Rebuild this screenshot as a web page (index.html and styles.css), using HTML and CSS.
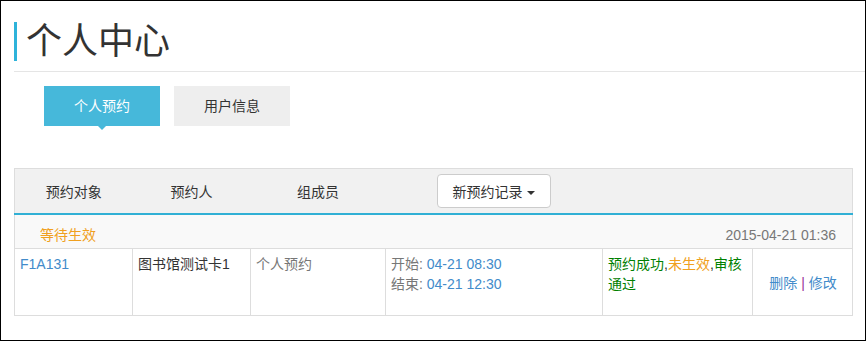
FILE: index.html
```html
<!DOCTYPE html>
<html lang="zh-CN">
<head>
    <meta charset="UTF-8">
    <title>个人中心</title>
    <link rel="stylesheet" href="styles.css">
</head>
<body>
    <div class="page">
        <div class="page-header">
            <h1>个人中心</h1>
        </div>

        <div class="tabs">
            <a class="tab active" href="#">个人预约</a>
            <a class="tab" href="#">用户信息</a>
        </div>

        <table class="records">
            <colgroup>
                <col style="width: 118px">
                <col style="width: 118px">
                <col style="width: 135px">
                <col style="width: 217px">
                <col style="width: 150px">
                <col style="width: 100px">
            </colgroup>
            <thead>
                <tr>
                    <th>预约对象</th>
                    <th>预约人</th>
                    <th>组成员</th>
                    <th><button class="dropdown-btn">新预约记录 <span class="caret"></span></button></th>
                    <th></th>
                    <th></th>
                </tr>
            </thead>
            <tbody>
                <tr class="group-row">
                    <td colspan="6">
                        <span class="status-wait">等待生效</span>
                        <span class="group-time">2015-04-21 01:36</span>
                    </td>
                </tr>
                <tr class="record-row">
                    <td><a class="link" href="#">F1A131</a></td>
                    <td>图书馆测试卡1</td>
                    <td class="muted">个人预约</td>
                    <td class="muted">
                        开始: <span class="time">04-21 08:30</span><br>
                        结束: <span class="time">04-21 12:30</span>
                    </td>
                    <td>
                        <span class="ok">预约成功</span>,<span class="pending">未生效</span>,<span class="ok">审核通过</span>
                    </td>
                    <td class="ops">
                        <a class="link" href="#">删除</a> <span class="sep">|</span> <a class="link" href="#">修改</a>
                    </td>
                </tr>
            </tbody>
        </table>
    </div>
</body>
</html>
```

FILE: styles.css
```css
body {
    margin: 0;
    font-family: "Liberation Sans", "Noto Sans CJK SC", sans-serif;
    font-size: 14px;
    color: #333;
    background-color: white;
}

.page {
    box-sizing: border-box;
    width: 866px;
    height: 341px;
    border: 1px solid #000;
    padding-left: 13px;
}

.page-header {
    margin-top: 21px;
    padding-bottom: 10px;
    border-bottom: 1px solid #e5e5e5;
}

h1 {
    margin: 0;
    padding-left: 9px;
    border-left: 3px solid #2eb3da;
    font-size: 36px;
    font-weight: normal;
    line-height: 39px;
    color: #333;
}

.tabs {
    display: flex;
    gap: 14px;
    margin: 14px 0 0 30px;
}

.tab {
    position: relative;
    width: 116px;
    height: 40px;
    line-height: 40px;
    text-align: center;
    background-color: #eee;
    color: #333;
    text-decoration: none;
}

.tab.active {
    background-color: #46b8da;
    color: white;
}

.tab.active::after {
    content: "";
    position: absolute;
    left: 54px;
    top: 40px;
    border-left: 4px solid transparent;
    border-right: 4px solid transparent;
    border-top: 4px solid #46b8da;
}

.records {
    margin-top: 42px;
    width: 839px;
    border-collapse: collapse;
    table-layout: fixed;
    border: 1px solid #ddd;
}

.records th {
    height: 44px;
    padding: 0;
    background-color: #f1f1f1;
    border-bottom: 2px solid #31b0d5;
    font-weight: normal;
    text-align: center;
}

.dropdown-btn {
    width: 114px;
    height: 34px;
    padding: 0;
    background-color: white;
    border: 1px solid #ccc;
    border-radius: 4px;
    font-family: inherit;
    font-size: 14px;
    color: #333;
}

.caret {
    display: inline-block;
    vertical-align: middle;
    margin-left: 1px;
    border-left: 4px solid transparent;
    border-right: 4px solid transparent;
    border-top: 4px solid #333;
}

.group-row td {
    padding: 10px 16px 3px 25px;
    line-height: 20px;
    background-color: #f9f9f9;
    border-bottom: 1px solid #ddd;
}

.status-wait {
    color: #f0a020;
}

.group-time {
    float: right;
    color: #777;
}

.record-row td {
    height: 55px;
    padding: 5px 4px 5px 5px;
    line-height: 20px;
    vertical-align: top;
    border: 1px solid #ddd;
}

.record-row td.ops {
    vertical-align: middle;
    text-align: center;
    padding-top: 6px;
}

.link,
.time {
    color: #428bca;
    text-decoration: none;
}

.muted {
    color: #777;
}

.ok {
    color: #008000;
}

.pending {
    color: #f0a020;
}

.sep {
    color: #993399;
}
```
